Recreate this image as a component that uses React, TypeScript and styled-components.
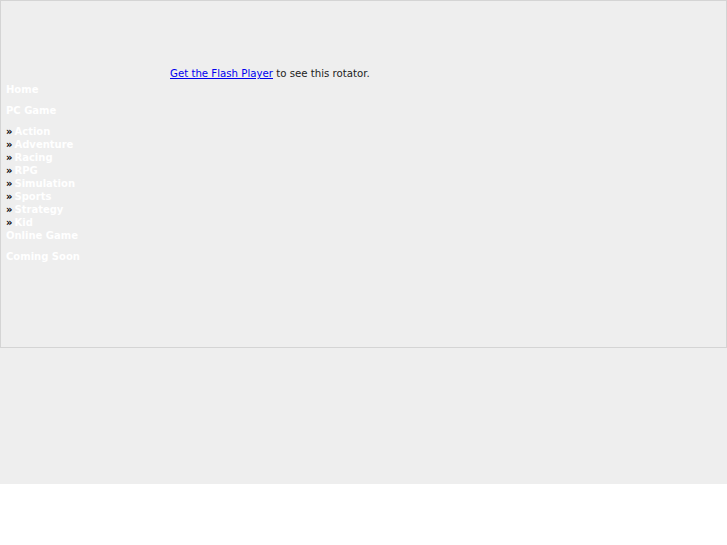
import React from 'react'
import styled, { createGlobalStyle } from 'styled-components'

const GlobalStyle = createGlobalStyle`
  body {
    margin: 0;
    background: #fff;
    font-family: "DejaVu Sans", sans-serif;
    font-size: 10px;
  }
`

const Page = styled.div`
  background: #eeeeee;
  height: 484px;
`

const Frame = styled.div`
  border: 1px solid #d4d4d4;
  box-sizing: border-box;
  height: 348px;
  padding-top: 66px;
`

const Rotator = styled.div`
  margin-left: 169px;
  line-height: 14px;
  font-size: 10.2px;
  color: #222;

  a {
    color: #0000ee;
    text-decoration: underline;
  }
`

const Nav = styled.ul`
  list-style: none;
  margin: 2px 0 0;
  padding: 0 0 0 5px;
`

const NavItem = styled.li`
  line-height: 13px;
  margin-bottom: 8px;

  & > a {
    color: #fff;
    font-weight: bold;
    text-decoration: none;
  }
`

const SubList = styled.ul`
  list-style: none;
  margin: 0 0 -8px;
  padding: 0;
`

const SubItem = styled.li`
  line-height: 13px;
  color: #000;
  font-weight: bold;

  a {
    margin-left: 2px;
    color: #fff;
    text-decoration: none;
  }
`

const genres = ['Action', 'Adventure', 'Racing', 'RPG', 'Simulation', 'Sports', 'Strategy', 'Kid']

const App = () => {
  return (
    <Page>
      <GlobalStyle />
      <Frame>
        <Rotator>
          <a href="#">Get the Flash Player</a> to see this rotator.
        </Rotator>
        <Nav>
          <NavItem><a href="#">Home</a></NavItem>
          <NavItem><a href="#">PC Game</a></NavItem>
          <NavItem>
            <SubList>
              {genres.map((g) => (
                <SubItem key={g}>»<a href="#">{g}</a></SubItem>
              ))}
            </SubList>
          </NavItem>
          <NavItem><a href="#">Online Game</a></NavItem>
          <NavItem><a href="#">Coming Soon</a></NavItem>
        </Nav>
      </Frame>
    </Page>
  )
}

export default App
